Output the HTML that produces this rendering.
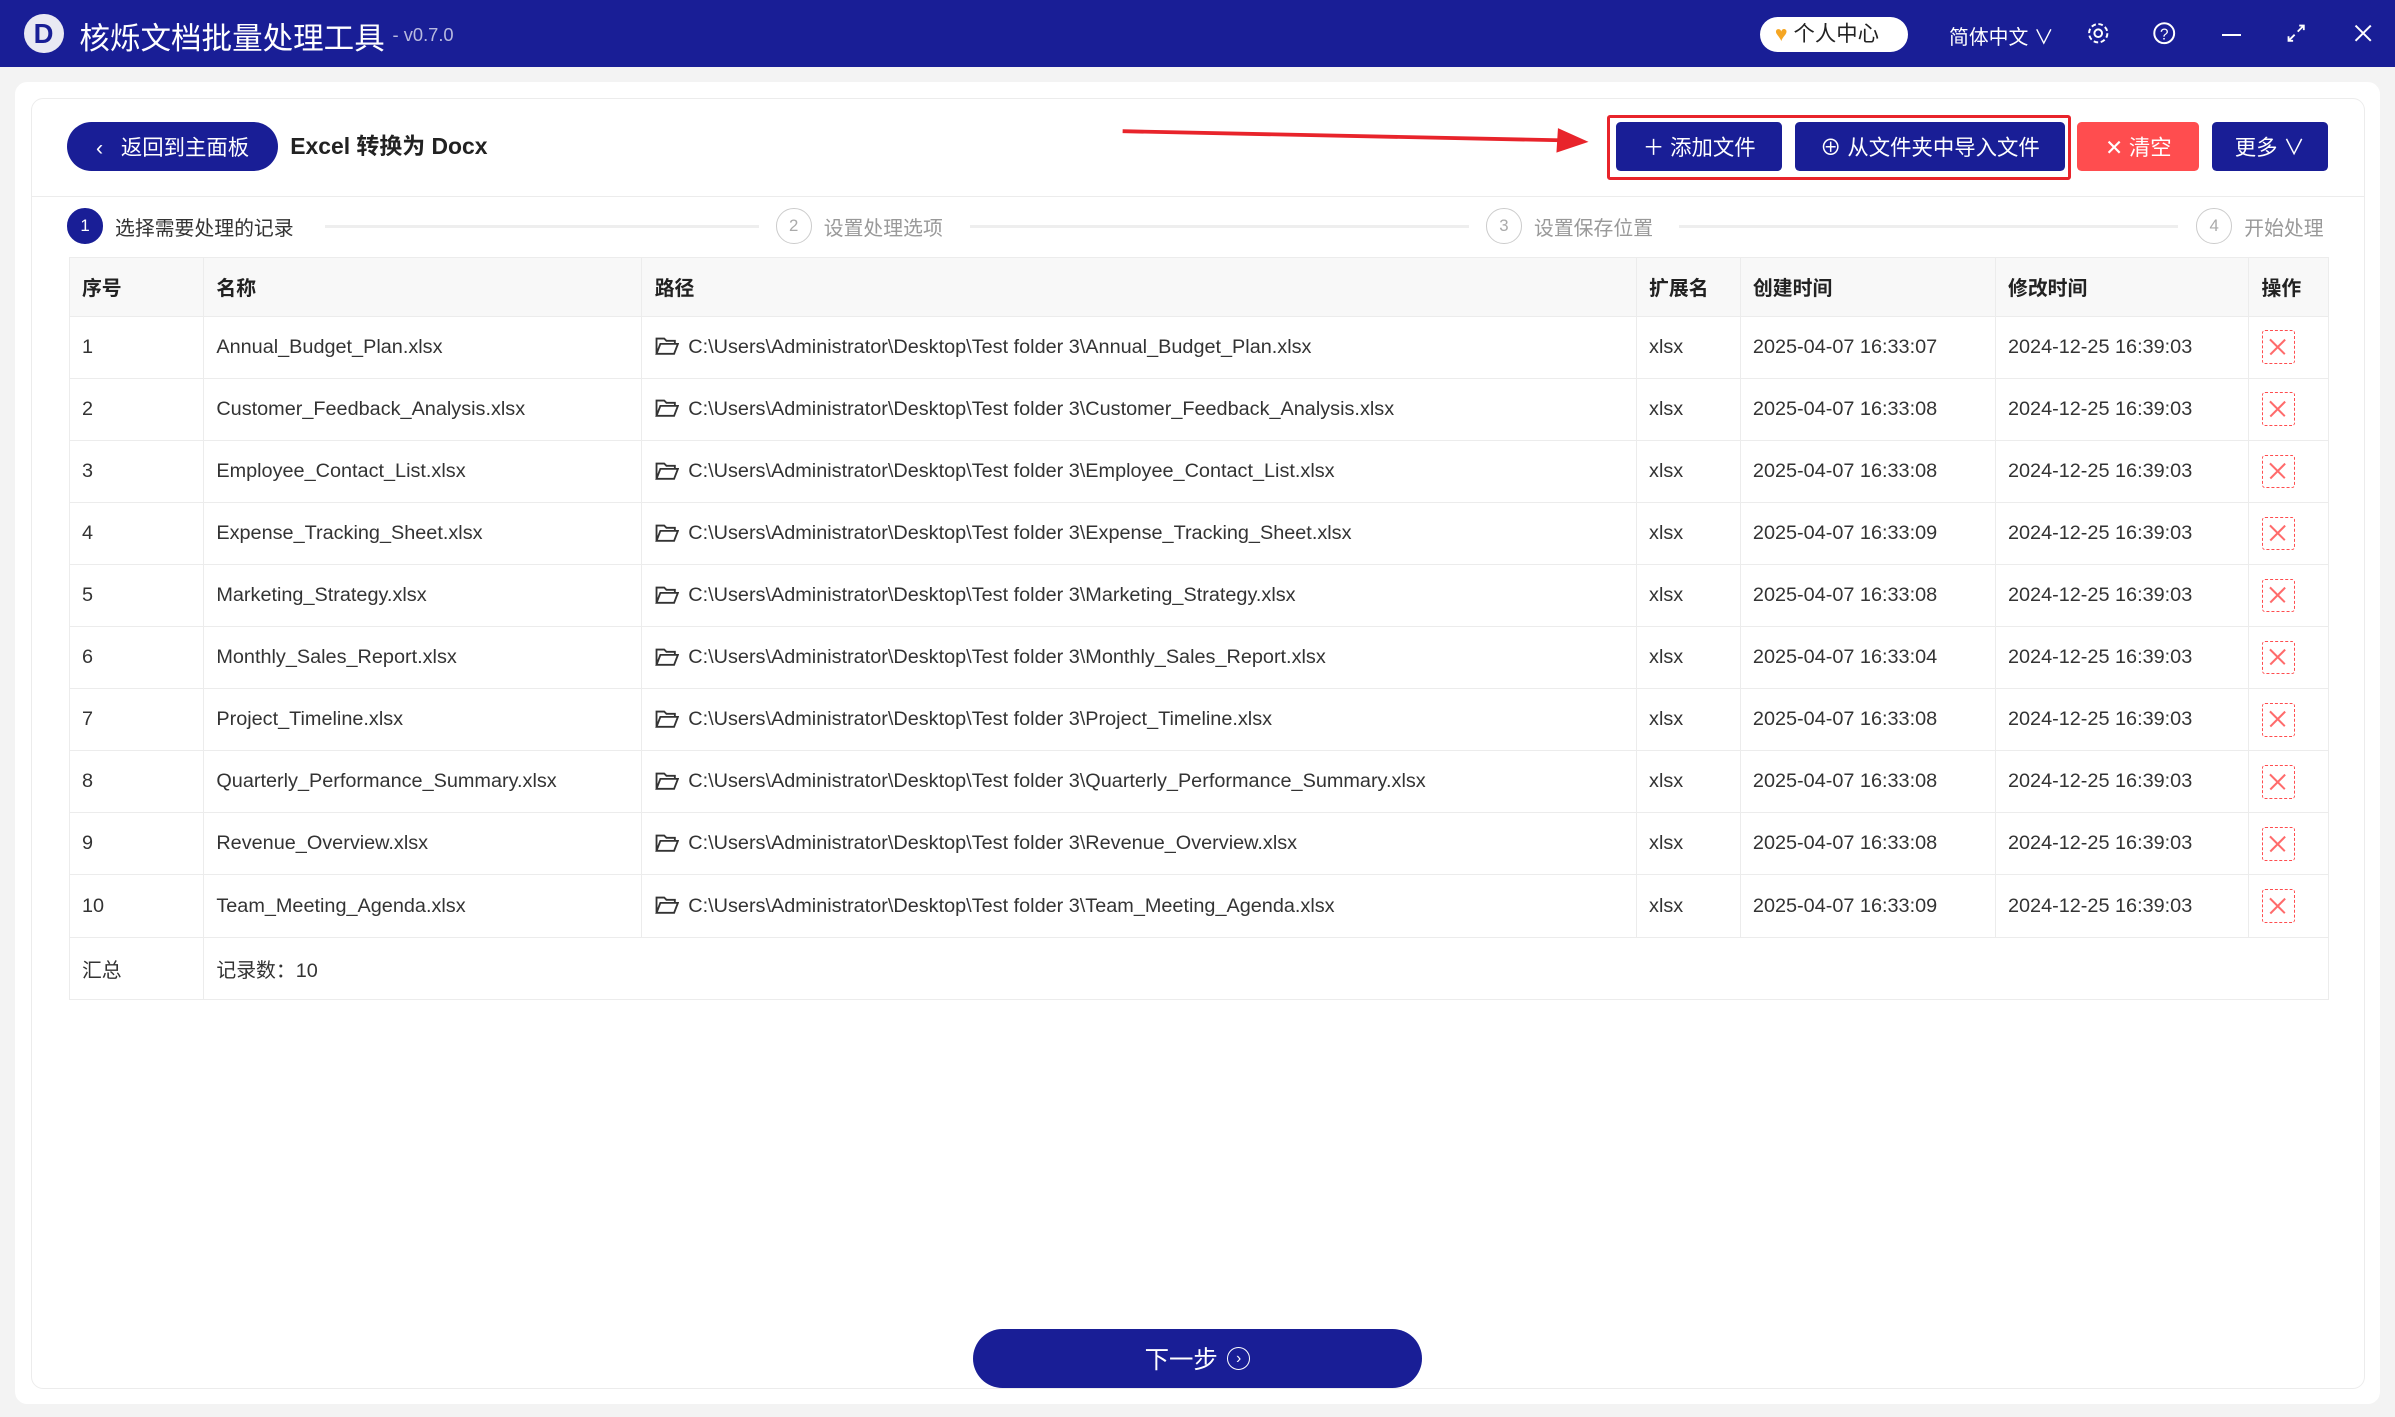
<!DOCTYPE html>
<html><head><meta charset="utf-8">
<style>
html,body{margin:0;padding:0;width:2395px;height:1417px;overflow:hidden;background:#f3f3f3}
#w{zoom:1.52742;width:1568px;height:928px;position:relative;font-family:"Liberation Sans","Noto Sans CJK SC",sans-serif;color:#333;background:#f3f3f3}
.abs{position:absolute}
.tb{left:0;top:0;width:1568px;height:44px;background:#191e96;color:#fff}
.card{left:10px;top:54px;width:1548px;height:865px;background:#fff;border-radius:8px}
.panel{left:20px;top:64px;width:1527px;height:844px;border:1px solid #ececec;border-radius:8px;background:#fff}
.btn{position:absolute;top:80px;height:32px;border-radius:3px;background:#191e96;color:#fff;font-size:14px;display:flex;align-items:center;justify-content:center;box-sizing:border-box}
table{border-collapse:collapse;position:absolute;left:45px;top:168px;width:1479px;font-size:13px;table-layout:fixed}
td,th{border:1px solid #ececec;padding:0 8px;height:40px;text-align:left;white-space:nowrap;overflow:hidden}
th{background:#f8f8f8;font-weight:bold;color:#222;height:38px}
tr td{height:40px}
.x{display:inline-block;width:22px;height:22px;border:1px dashed #ff4d4f;border-radius:2px;box-sizing:border-box;position:relative;vertical-align:middle}
.x:before,.x:after{content:"";position:absolute;left:3px;top:9.5px;width:14px;height:1px;background:#ff6b6b;transform:rotate(45deg)}
.x:after{transform:rotate(-45deg)}
.step{position:absolute;top:136px;height:24px;display:flex;align-items:center;font-size:13px;color:#999}
.c{width:22px;height:22px;border-radius:50%;border:1px solid #ccc;display:inline-flex;align-items:center;justify-content:center;font-size:11px;color:#aaa;margin-right:8px}
.line{position:absolute;top:147px;height:2px;background:#eee}
.f{display:inline-block;vertical-align:-2px;margin-right:6px}
</style></head><body><div id="w">
<div class="abs tb">
  <div class="abs" style="left:16px;top:9px;width:26px;height:26px;border-radius:50%;background:#e9e9f3;"></div>
  <div class="abs" style="left:22px;top:12px;color:#191e96;font-weight:bold;font-size:18px;">D</div>
  <div class="abs" style="left:52px;top:9px;font-size:20px;">核烁文档批量处理工具</div>
  <div class="abs" style="left:257px;top:16px;font-size:12px;color:#b8badf">- v0.7.0</div>
  <div class="abs" style="left:1152px;top:11px;width:97px;height:23px;border-radius:12px;background:#fff;color:#222;font-size:14px;line-height:23px;"><span style="color:#f5a623;margin-left:10px">♥</span> 个人中心</div>
  <div class="abs" style="left:1276px;top:14px;font-size:13px;">简体中文 ∨</div>
  <svg class="abs" style="left:1366px;top:14px" width="16" height="16" viewBox="0 0 16 16"><circle cx="8" cy="8" r="2.5" fill="none" stroke="#fff" stroke-width="1.3"/><circle cx="8" cy="8" r="6" fill="none" stroke="#fff" stroke-width="1.3" stroke-dasharray="3 1.7"/></svg>
  <svg class="abs" style="left:1409px;top:14px" width="16" height="16" viewBox="0 0 16 16"><circle cx="8" cy="8" r="6.5" fill="none" stroke="#fff" stroke-width="1.3"/><text x="8" y="12" font-size="10" fill="#fff" text-anchor="middle" font-family="Liberation Sans">?</text></svg>
  <div class="abs" style="left:1455px;top:22px;width:12px;height:1.5px;background:#fff"></div>
  <svg class="abs" style="left:1497px;top:16px" width="12" height="12" viewBox="0 0 12 12"><path d="M1 11L5 7M7 5L11 1M8 1H11V4M1 8V11H4" stroke="#fff" fill="none" stroke-width="1.2"/></svg>
  <svg class="abs" style="left:1541px;top:16px" width="12" height="12" viewBox="0 0 12 12"><path d="M1 1L11 11M11 1L1 11" stroke="#fff" stroke-width="1.3"/></svg>
</div>
<div class="abs card"></div>
<div class="abs panel"></div>
<div class="btn" style="left:44px;width:138px;border-radius:16px;">‹&nbsp;&nbsp; 返回到主面板</div>
<div class="abs" style="left:190px;top:86px;font-size:15px;font-weight:bold;color:#222;line-height:20px">Excel 转换为 Docx</div>
<svg class="abs" style="left:730px;top:78px" width="320" height="24"><path d="M5 8L295 14" stroke="#e8242b" stroke-width="2.5"/><path d="M290 6L310 15L289 22Z" fill="#e8242b"/></svg>
<div class="abs" style="left:1052px;top:75px;width:300px;height:39px;border:2px solid #e8242b;border-radius:2px"></div>
<div class="btn" style="left:1058px;width:109px;">＋ 添加文件</div>
<div class="btn" style="left:1175px;width:177px;">⊕ 从文件夹中导入文件</div>
<div class="btn" style="left:1360px;width:80px;background:#ff4d4f">✕ 清空</div>
<div class="btn" style="left:1448px;width:76px;">更多 ∨</div>
<div class="abs" style="left:20px;top:128px;width:1528px;height:1px;background:#ececec"></div>
<div class="step" style="left:44px;color:#333"><span class="c" style="background:#191e96;border-color:#191e96;color:#fff">1</span>选择需要处理的记录</div>
<div class="line" style="left:213px;width:284px"></div>
<div class="step" style="left:508px"><span class="c">2</span>设置处理选项</div>
<div class="line" style="left:635px;width:327px"></div>
<div class="step" style="left:973px"><span class="c">3</span>设置保存位置</div>
<div class="line" style="left:1099px;width:327px"></div>
<div class="step" style="left:1438px"><span class="c">4</span>开始处理</div>
<table>
<colgroup><col style="width:88px"><col style="width:287px"><col style="width:651px"><col style="width:68px"><col style="width:167px"><col style="width:166px"><col style="width:52px"></colgroup>
<tr><th>序号</th><th>名称</th><th>路径</th><th>扩展名</th><th>创建时间</th><th>修改时间</th><th>操作</th></tr>
<tr><td>1</td><td>Annual_Budget_Plan.xlsx</td><td><svg class="f" width="16" height="12" viewBox="0 0 16 12"><path d="M1 11V1H6L7.5 2.5H13V4.5M1 11L3.5 4.5H15L12.5 11Z" fill="none" stroke="#333" stroke-width="1.2"/></svg>C:\Users\Administrator\Desktop\Test folder 3\Annual_Budget_Plan.xlsx</td><td>xlsx</td><td>2025-04-07 16:33:07</td><td>2024-12-25 16:39:03</td><td><span class="x"></span></td></tr>
<tr><td>2</td><td>Customer_Feedback_Analysis.xlsx</td><td><svg class="f" width="16" height="12" viewBox="0 0 16 12"><path d="M1 11V1H6L7.5 2.5H13V4.5M1 11L3.5 4.5H15L12.5 11Z" fill="none" stroke="#333" stroke-width="1.2"/></svg>C:\Users\Administrator\Desktop\Test folder 3\Customer_Feedback_Analysis.xlsx</td><td>xlsx</td><td>2025-04-07 16:33:08</td><td>2024-12-25 16:39:03</td><td><span class="x"></span></td></tr>
<tr><td>3</td><td>Employee_Contact_List.xlsx</td><td><svg class="f" width="16" height="12" viewBox="0 0 16 12"><path d="M1 11V1H6L7.5 2.5H13V4.5M1 11L3.5 4.5H15L12.5 11Z" fill="none" stroke="#333" stroke-width="1.2"/></svg>C:\Users\Administrator\Desktop\Test folder 3\Employee_Contact_List.xlsx</td><td>xlsx</td><td>2025-04-07 16:33:08</td><td>2024-12-25 16:39:03</td><td><span class="x"></span></td></tr>
<tr><td>4</td><td>Expense_Tracking_Sheet.xlsx</td><td><svg class="f" width="16" height="12" viewBox="0 0 16 12"><path d="M1 11V1H6L7.5 2.5H13V4.5M1 11L3.5 4.5H15L12.5 11Z" fill="none" stroke="#333" stroke-width="1.2"/></svg>C:\Users\Administrator\Desktop\Test folder 3\Expense_Tracking_Sheet.xlsx</td><td>xlsx</td><td>2025-04-07 16:33:09</td><td>2024-12-25 16:39:03</td><td><span class="x"></span></td></tr>
<tr><td>5</td><td>Marketing_Strategy.xlsx</td><td><svg class="f" width="16" height="12" viewBox="0 0 16 12"><path d="M1 11V1H6L7.5 2.5H13V4.5M1 11L3.5 4.5H15L12.5 11Z" fill="none" stroke="#333" stroke-width="1.2"/></svg>C:\Users\Administrator\Desktop\Test folder 3\Marketing_Strategy.xlsx</td><td>xlsx</td><td>2025-04-07 16:33:08</td><td>2024-12-25 16:39:03</td><td><span class="x"></span></td></tr>
<tr><td>6</td><td>Monthly_Sales_Report.xlsx</td><td><svg class="f" width="16" height="12" viewBox="0 0 16 12"><path d="M1 11V1H6L7.5 2.5H13V4.5M1 11L3.5 4.5H15L12.5 11Z" fill="none" stroke="#333" stroke-width="1.2"/></svg>C:\Users\Administrator\Desktop\Test folder 3\Monthly_Sales_Report.xlsx</td><td>xlsx</td><td>2025-04-07 16:33:04</td><td>2024-12-25 16:39:03</td><td><span class="x"></span></td></tr>
<tr><td>7</td><td>Project_Timeline.xlsx</td><td><svg class="f" width="16" height="12" viewBox="0 0 16 12"><path d="M1 11V1H6L7.5 2.5H13V4.5M1 11L3.5 4.5H15L12.5 11Z" fill="none" stroke="#333" stroke-width="1.2"/></svg>C:\Users\Administrator\Desktop\Test folder 3\Project_Timeline.xlsx</td><td>xlsx</td><td>2025-04-07 16:33:08</td><td>2024-12-25 16:39:03</td><td><span class="x"></span></td></tr>
<tr><td>8</td><td>Quarterly_Performance_Summary.xlsx</td><td><svg class="f" width="16" height="12" viewBox="0 0 16 12"><path d="M1 11V1H6L7.5 2.5H13V4.5M1 11L3.5 4.5H15L12.5 11Z" fill="none" stroke="#333" stroke-width="1.2"/></svg>C:\Users\Administrator\Desktop\Test folder 3\Quarterly_Performance_Summary.xlsx</td><td>xlsx</td><td>2025-04-07 16:33:08</td><td>2024-12-25 16:39:03</td><td><span class="x"></span></td></tr>
<tr><td>9</td><td>Revenue_Overview.xlsx</td><td><svg class="f" width="16" height="12" viewBox="0 0 16 12"><path d="M1 11V1H6L7.5 2.5H13V4.5M1 11L3.5 4.5H15L12.5 11Z" fill="none" stroke="#333" stroke-width="1.2"/></svg>C:\Users\Administrator\Desktop\Test folder 3\Revenue_Overview.xlsx</td><td>xlsx</td><td>2025-04-07 16:33:08</td><td>2024-12-25 16:39:03</td><td><span class="x"></span></td></tr>
<tr><td>10</td><td>Team_Meeting_Agenda.xlsx</td><td><svg class="f" width="16" height="12" viewBox="0 0 16 12"><path d="M1 11V1H6L7.5 2.5H13V4.5M1 11L3.5 4.5H15L12.5 11Z" fill="none" stroke="#333" stroke-width="1.2"/></svg>C:\Users\Administrator\Desktop\Test folder 3\Team_Meeting_Agenda.xlsx</td><td>xlsx</td><td>2025-04-07 16:33:09</td><td>2024-12-25 16:39:03</td><td><span class="x"></span></td></tr>
<tr><td>汇总</td><td colspan="6" style="border-right:1px solid #ececec">记录数：10</td></tr>
</table>
<div class="abs" style="left:637px;top:870px;width:294px;height:39px;border-radius:20px;background:#191e96;color:#fff;font-size:16px;display:flex;align-items:center;justify-content:center">下一步 <span style="display:inline-block;width:14px;height:14px;border:1.3px solid #fff;border-radius:50%;font-size:10px;line-height:14px;text-align:center;margin-left:6px">›</span></div>
</div></body></html>
